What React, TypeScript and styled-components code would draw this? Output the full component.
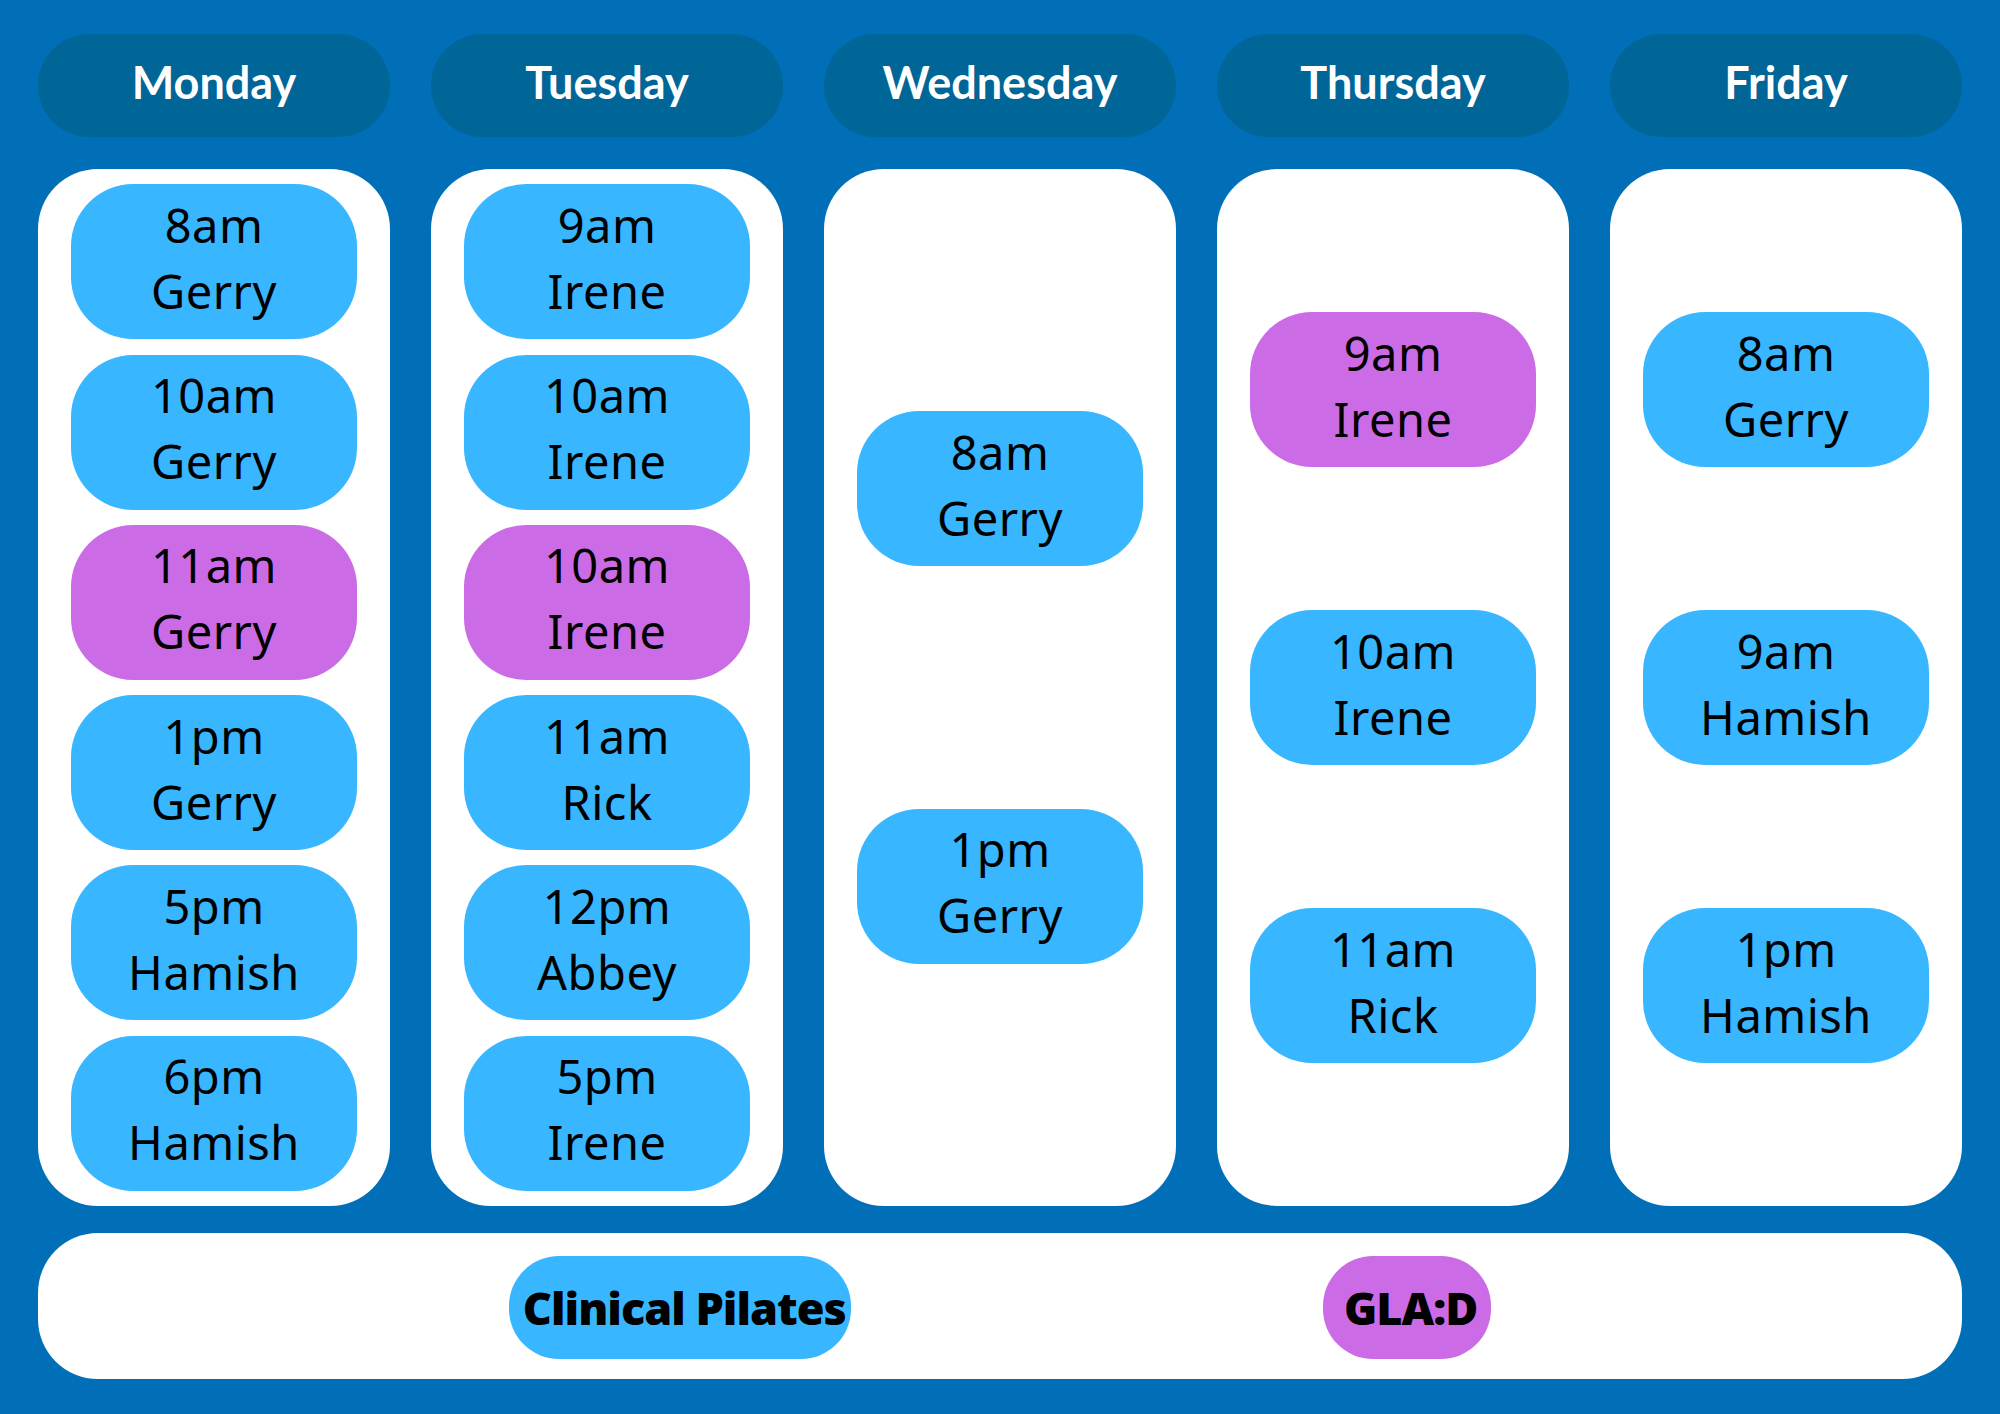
import React from "react";
import styled, { createGlobalStyle } from "styled-components";

const GlobalStyle = createGlobalStyle`
  html, body { margin: 0; padding: 0; }
  body { background: #006fb7; }
`;

type Kind = "pilates" | "glad";

const COLORS: Record<Kind, string> = {
  pilates: "#38b6ff",
  glad: "#cb6ce6",
};

interface Session {
  time: string;
  who: string;
  kind: Kind;
}

interface Day {
  name: string;
  sessions: Session[];
}

const DAYS: Day[] = [
  {
    name: "Monday",
    sessions: [
      { time: "8am", who: "Gerry", kind: "pilates" },
      { time: "10am", who: "Gerry", kind: "pilates" },
      { time: "11am", who: "Gerry", kind: "glad" },
      { time: "1pm", who: "Gerry", kind: "pilates" },
      { time: "5pm", who: "Hamish", kind: "pilates" },
      { time: "6pm", who: "Hamish", kind: "pilates" },
    ],
  },
  {
    name: "Tuesday",
    sessions: [
      { time: "9am", who: "Irene", kind: "pilates" },
      { time: "10am", who: "Irene", kind: "pilates" },
      { time: "10am", who: "Irene", kind: "glad" },
      { time: "11am", who: "Rick", kind: "pilates" },
      { time: "12pm", who: "Abbey", kind: "pilates" },
      { time: "5pm", who: "Irene", kind: "pilates" },
    ],
  },
  {
    name: "Wednesday",
    sessions: [
      { time: "8am", who: "Gerry", kind: "pilates" },
      { time: "1pm", who: "Gerry", kind: "pilates" },
    ],
  },
  {
    name: "Thursday",
    sessions: [
      { time: "9am", who: "Irene", kind: "glad" },
      { time: "10am", who: "Irene", kind: "pilates" },
      { time: "11am", who: "Rick", kind: "pilates" },
    ],
  },
  {
    name: "Friday",
    sessions: [
      { time: "8am", who: "Gerry", kind: "pilates" },
      { time: "9am", who: "Hamish", kind: "pilates" },
      { time: "1pm", who: "Hamish", kind: "pilates" },
    ],
  },
];

const Page = styled.div`
  width: 2000px;
  height: 1414px;
  box-sizing: border-box;
  background: #006fb7;
  padding: 34px 38px 35px;
  display: flex;
  flex-direction: column;
`;

const Timetable = styled.div`
  display: grid;
  grid-template-columns: repeat(5, 352px);
  grid-template-rows: 103px 1037px;
  column-gap: 41px;
  row-gap: 32px;
`;

const DayHeader = styled.div`
  background: #006597;
  border-radius: 52px;
  display: flex;
  align-items: center;
  justify-content: center;
  color: #ffffff;
  font-family: "Lato", "Noto Sans", sans-serif;
  font-weight: 700;
  font-size: 45px;
  padding-bottom: 8px;
  box-sizing: border-box;
`;

const DayCard = styled.div`
  background: #ffffff;
  border-radius: 60px;
  padding: 0 33px;
  display: flex;
  flex-direction: column;
  justify-content: space-evenly;
`;

const Slot = styled.div<{ $kind: Kind }>`
  height: 155px;
  flex: 0 0 155px;
  border-radius: 62px;
  background: ${(p) => COLORS[p.$kind]};
  display: flex;
  flex-direction: column;
  align-items: center;
  justify-content: center;
  color: #000000;
  font-family: "Noto Sans", "Open Sans", sans-serif;
  font-weight: 400;
  font-size: 47px;
  line-height: 66px;
  letter-spacing: 0.5px;
  padding-bottom: 8px;
  box-sizing: border-box;
`;

const LegendBar = styled.div`
  margin-top: 27px;
  height: 146px;
  flex: 0 0 146px;
  background: #ffffff;
  border-radius: 60px;
  display: flex;
  align-items: center;
  justify-content: space-evenly;
`;

const LegendPill = styled.div<{ $kind: Kind; $w: number }>`
  width: ${(p) => p.$w}px;
  height: 103px;
  border-radius: 50px;
  background: ${(p) => COLORS[p.$kind]};
  display: flex;
  align-items: center;
  justify-content: center;
  color: #000000;
  font-family: "Open Sans", "Noto Sans", sans-serif;
  font-weight: 800;
  font-size: 45px;
  letter-spacing: -1px;
  white-space: nowrap;
  margin-top: 2px;
  padding-left: 8px;
  box-sizing: border-box;
`;

export default function App() {
  return (
    <>
      <GlobalStyle />
      <Page>
        <Timetable>
          {DAYS.map((d) => (
            <DayHeader key={d.name}>{d.name}</DayHeader>
          ))}
          {DAYS.map((d) => (
            <DayCard key={d.name + "-card"}>
              {d.sessions.map((s, i) => (
                <Slot key={i} $kind={s.kind}>
                  <span>{s.time}</span>
                  <span>{s.who}</span>
                </Slot>
              ))}
            </DayCard>
          ))}
        </Timetable>
        <LegendBar>
          <LegendPill $kind="pilates" $w={342}>
            Clinical Pilates
          </LegendPill>
          <LegendPill $kind="glad" $w={168}>
            GLA:D
          </LegendPill>
        </LegendBar>
      </Page>
    </>
  );
}
